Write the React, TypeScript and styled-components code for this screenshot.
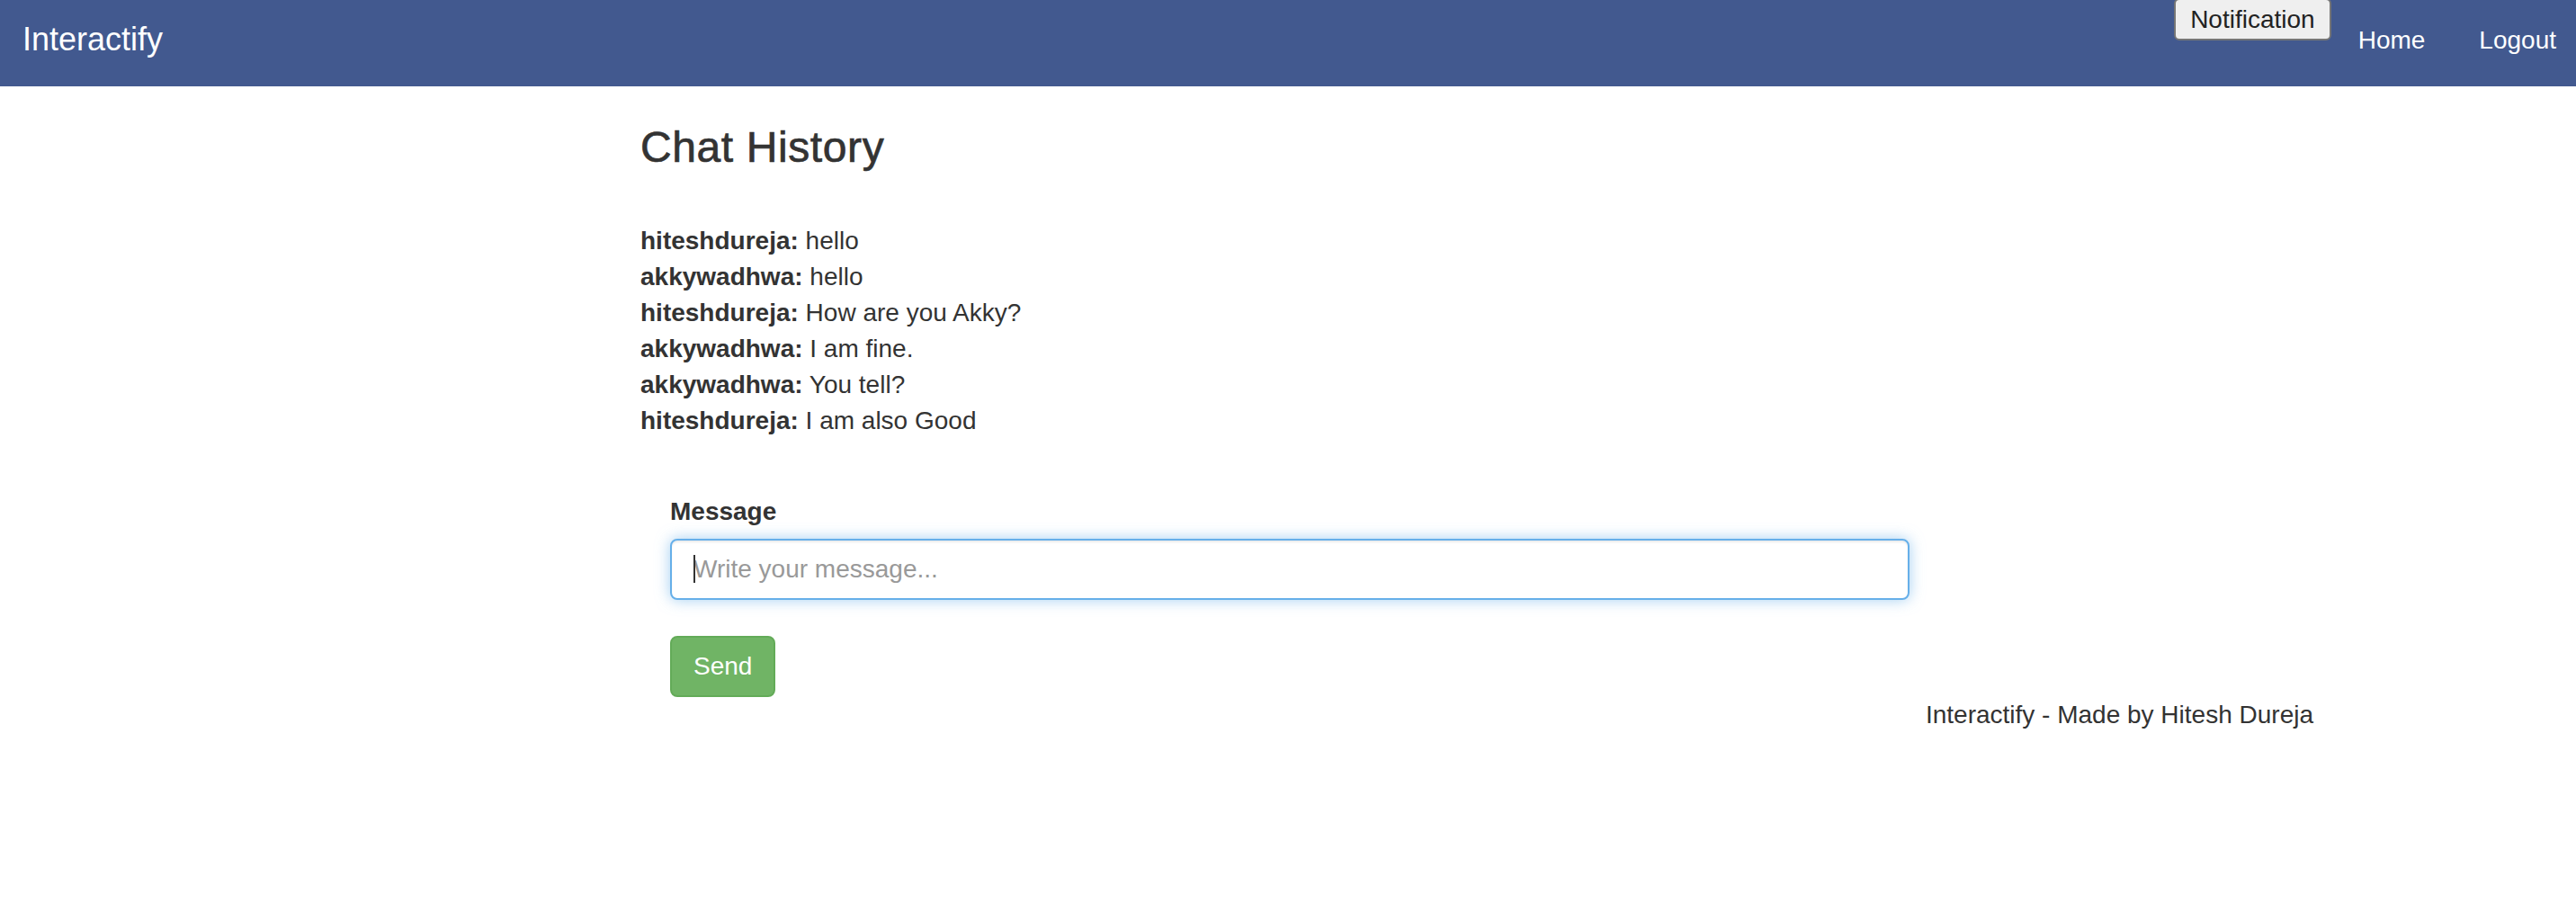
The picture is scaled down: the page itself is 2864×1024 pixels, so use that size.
import React from 'react';
import styled, { createGlobalStyle } from 'styled-components';

const GlobalStyle = createGlobalStyle`
	* {
		box-sizing: border-box;
	}
	html,
	body {
		margin: 0;
		padding: 0;
		background: #fff;
	}
	body {
		font-family: 'Liberation Sans', Helvetica, Arial, sans-serif;
		font-size: 28px;
		line-height: 40px;
		color: #333;
	}
`;

const Navbar = styled.nav`
	display: flex;
	align-items: flex-start;
	height: 96px;
	padding: 0 22px 0 25px;
	background: #42598f;
`;

const Brand = styled.a`
	padding-top: 24px;
	font-size: 36px;
	line-height: 40px;
	color: #fff;
	text-decoration: none;
`;

const NavRight = styled.div`
	display: flex;
	align-items: flex-start;
	margin-left: auto;
`;

const NotifyButton = styled.button`
	height: 47px;
	margin-top: -2px;
	padding: 0 16px;
	font-family: inherit;
	font-size: 28px;
	line-height: normal;
	color: #222;
	background: #efefef;
	border: 2px solid #767676;
	border-radius: 6px;
`;

const NavLinks = styled.ul`
	display: flex;
	gap: 60px;
	margin: 0 0 0 30px;
	padding: 0;
	list-style: none;
`;

const NavLink = styled.a`
	display: block;
	padding-top: 25px;
	line-height: 40px;
	color: #fff;
	text-decoration: none;
`;

const Container = styled.main`
	width: 2340px;
	margin: 0 auto;
	padding: 0 30px;
`;

const ChatColumn = styled.section`
	width: 1500px;
	margin-left: 420px;
`;

const Title = styled.h3`
	margin: 42px 0 57px;
	font-size: 48px;
	font-weight: 500;
	line-height: 1.1;
	letter-spacing: 0.6px;
	-webkit-text-stroke: 0.7px #333;
`;

const ChatList = styled.div`
	display: flex;
	flex-direction: column;
`;

const ChatLine = styled.div`
	line-height: 40px;
`;

const Sender = styled.strong`
	font-weight: 700;
`;

const MessageForm = styled.form`
	width: 1378px;
	margin: 61px 0 0 33px;
`;

const Label = styled.label`
	display: block;
	margin-bottom: 10px;
	font-weight: 700;
	line-height: 40px;
`;

const InputWrap = styled.div`
	position: relative;
`;

const Input = styled.input`
	display: block;
	width: 100%;
	height: 68px;
	padding: 12px 24px;
	font-family: inherit;
	font-size: 28px;
	color: #555;
	background: #fff;
	border: 2px solid #66afe9;
	border-radius: 8px;
	outline: none;
	box-shadow: inset 0 2px 2px rgba(0, 0, 0, 0.075), 0 0 16px rgba(102, 175, 233, 0.6);

	&::placeholder {
		color: #999;
	}
`;

const Caret = styled.span`
	position: absolute;
	left: 26px;
	top: 18px;
	width: 2px;
	height: 31px;
	background: #333;
`;

const SendButton = styled.button`
	display: block;
	height: 68px;
	margin-top: 40px;
	padding: 12px 24px;
	font-family: inherit;
	font-size: 28px;
	line-height: 40px;
	color: #fff;
	background: #70b465;
	border: 2px solid #63ab58;
	border-radius: 8px;
`;

const Footer = styled.footer`
	text-align: right;
	line-height: 40px;
`;

const messages = [
	{ from: 'hiteshdureja', text: 'hello' },
	{ from: 'akkywadhwa', text: 'hello' },
	{ from: 'hiteshdureja', text: 'How are you Akky?' },
	{ from: 'akkywadhwa', text: 'I am fine.' },
	{ from: 'akkywadhwa', text: 'You tell?' },
	{ from: 'hiteshdureja', text: 'I am also Good' },
];

export default function App() {
	return (
		<>
			<GlobalStyle />
			<Navbar>
				<Brand href="#">Interactify</Brand>
				<NavRight>
					<NotifyButton type="button">Notification</NotifyButton>
					<NavLinks>
						<li>
							<NavLink href="#">Home</NavLink>
						</li>
						<li>
							<NavLink href="#">Logout</NavLink>
						</li>
					</NavLinks>
				</NavRight>
			</Navbar>
			<Container>
				<ChatColumn>
					<Title>Chat History</Title>
					<ChatList>
						{messages.map((msg, i) => (
							<ChatLine key={i}>
								<Sender>{msg.from}:</Sender> {msg.text}
							</ChatLine>
						))}
					</ChatList>
					<MessageForm onSubmit={(e) => e.preventDefault()}>
						<Label htmlFor="message">Message</Label>
						<InputWrap>
							<Input id="message" type="text" placeholder="Write your message..." />
							<Caret />
						</InputWrap>
						<SendButton type="submit">Send</SendButton>
					</MessageForm>
				</ChatColumn>
				<Footer>Interactify - Made by Hitesh Dureja</Footer>
			</Container>
		</>
	);
}
